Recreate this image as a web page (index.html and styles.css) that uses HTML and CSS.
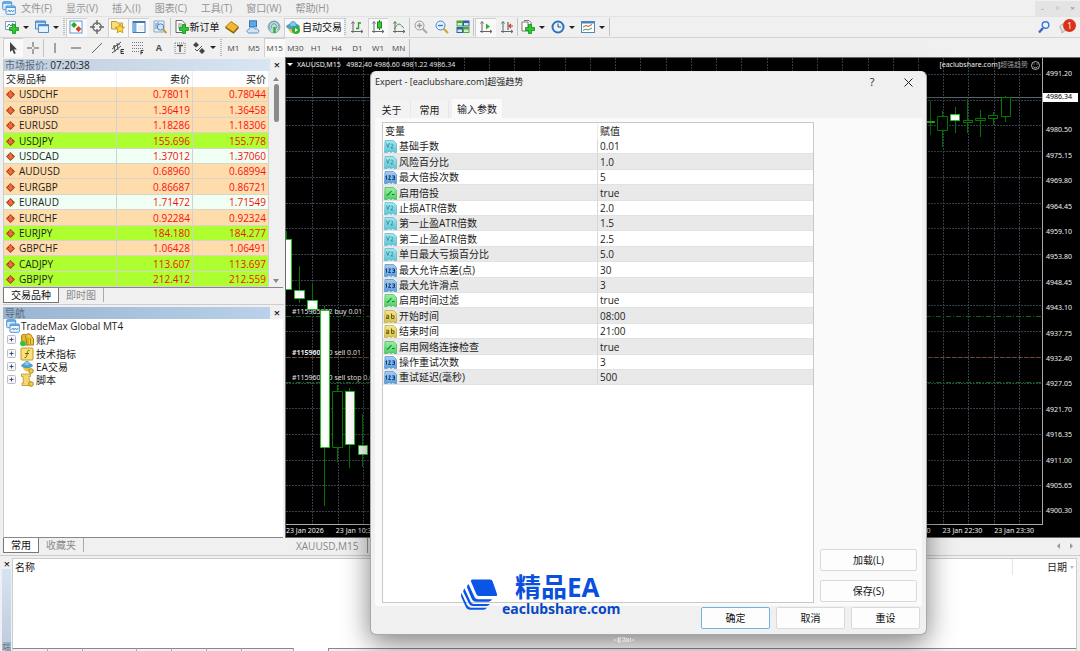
FILE: index.html
```html
<!DOCTYPE html>
<html lang="zh-CN">
<head>
<meta charset="utf-8">
<title>XAUUSD,M15</title>
<link rel="stylesheet" href="styles.css">
</head>
<body>
<svg class="defs" aria-hidden="true">
  <defs>
    <linearGradient id="gc" x1="0" y1="0" x2="0" y2="1"><stop offset="0" stop-color="#a4e8f0"/><stop offset="1" stop-color="#5fc4d4"/></linearGradient>
    <linearGradient id="gb" x1="0" y1="0" x2="0" y2="1"><stop offset="0" stop-color="#a9cdf0"/><stop offset="1" stop-color="#5b9fdc"/></linearGradient>
    <linearGradient id="gg" x1="0" y1="0" x2="0" y2="1"><stop offset="0" stop-color="#98f0a4"/><stop offset="1" stop-color="#4fcf66"/></linearGradient>
    <linearGradient id="gy" x1="0" y1="0" x2="0" y2="1"><stop offset="0" stop-color="#f3e88e"/><stop offset="1" stop-color="#d8c34c"/></linearGradient>
    <symbol id="i-dbl" viewBox="0 0 13 13"><path d="M1 .5h8.500l3 3v9h-2l-1.500-1-2 1-2-1-2 1h-2.500z" fill="url(#gc)" stroke="#56b4c4" stroke-width=".7"/><path d="M2.500 3.500l1.300 4 1.700-4.500M6.800 4.700c1-1.200 2.700-.4 2 .9L6.800 8h2.500" fill="none" stroke="#2a8796" stroke-width=".8"/></symbol>
    <symbol id="i-int" viewBox="0 0 13 13"><path d="M1 .5h8.500l3 3v9h-2l-1.500-1-2 1-2-1-2 1h-2.500z" fill="url(#gb)" stroke="#4f8cc8" stroke-width=".7"/><path d="M1.500 5.500l1-.8v4M4.500 4.900h2L4.600 8.500h2.300M8.300 4.900h2.200v3.700H8.200M8.800 6.700h1.700" fill="none" stroke="#12407c"/></symbol>
    <symbol id="i-bool" viewBox="0 0 13 13"><path d="M1 .5h8.500l3 3v9h-2l-1.500-1-2 1-2-1-2 1h-2.500z" fill="url(#gg)" stroke="#45b458" stroke-width=".7"/><path d="M2.500 8h1.500l3.500-4M8 7.500h2.500" fill="none" stroke="#137a28" stroke-width="1.100"/></symbol>
    <symbol id="i-str" viewBox="0 0 13 13"><path d="M1 .5h8.500l3 3v9h-2l-1.500-1-2 1-2-1-2 1h-2.500z" fill="url(#gy)" stroke="#b9a53c" stroke-width=".7"/><path d="M2.300 5.300h2.400v3.200H2.500V7h2M7.500 3.500v5h2.500V5.800H7.500" fill="none" stroke="#6e5b10"/></symbol>
    <symbol id="i-down" viewBox="0 0 9 9"><path d="M4.500 0L9 4.500 4.500 9 0 4.500z" fill="#a83a1a"/><path d="M3 1.500h3v2.500h2L4.500 7.700 1 4h2z" fill="#ee6a3c"/></symbol>
    <symbol id="i-plus" viewBox="0 0 9 9"><rect x=".5" y=".5" width="8" height="8" rx="1" fill="#f6f6f6" stroke="#bbb"/><path d="M2.500 4.500h4M4.500 2.500v4" stroke="#3a4f9a"/></symbol>
    <symbol id="i-app" viewBox="0 0 14 14"><rect x=".7" y=".7" width="9" height="8" rx="1" fill="#d9ecfb" stroke="#4b94d6"/><path d="M.7 2h9" stroke="#4b94d6" stroke-width="1.500"/><rect x="4" y="5" width="9.300" height="8.300" rx="1" fill="#eef7ff" stroke="#4b94d6"/><path d="M4 6.200h9.300" stroke="#4b94d6" stroke-width="1.500"/><path d="M5.500 11l1.500-2 1 2 1.500-2 1 2 1.500-2" fill="none" stroke="#3c7fc0" stroke-width=".8"/></symbol>
    <symbol id="i-add" viewBox="0 0 10 10"><path d="M3.500.5h3v3h3v3h-3v3h-3v-3h-3v-3h3z" fill="#2dcc2d" stroke="#128a12" stroke-width=".8"/></symbol>
    <symbol id="i-ea" viewBox="0 0 14 14"><path d="M3 7h7l1 4-3 2H5L2.500 10z" fill="#edc548"/><ellipse cx="7" cy="6.500" rx="6.500" ry="2.500" fill="#4fa6d8" stroke="#2b7fb5" stroke-width=".6"/><path d="M3.500 6c0-6 7-6 7 0-2 1-5 1-7 0z" fill="#7cc8ec" stroke="#2b7fb5" stroke-width=".6"/></symbol>
  </defs>
</svg>

<div class="app">
  <nav class="menubar">
    <svg class="ic14"><use href="#i-app"/></svg>
    <button>文件(F)</button><button>显示(V)</button><button>插入(I)</button><button>图表(C)</button><button>工具(T)</button><button>窗口(W)</button><button>帮助(H)</button>
    <div class="winctl"><button aria-label="最小化">-</button><button aria-label="还原">▫</button><button aria-label="关闭">×</button></div>
  </nav>

  <div class="toolbar">
    <button class="tb drop" aria-label="新图表"><svg class="ic14" viewBox="0 0 14 14"><path d="M.5 1.500h10v8H.5z" fill="#fff" stroke="#6f9cc8"/><path d="M2 7l2-3 2 2 2-3" fill="none" stroke="#5577a0"/><use href="#i-add" x="4" y="4" width="10" height="10"/></svg></button>
    <button class="tb drop" aria-label="配置"><svg class="ic14" viewBox="0 0 14 14"><path d="M.5 1h10v8H.5z" fill="#cfe4f8" stroke="#4f8cc8"/><path d="M3.500 4.500h10v8h-10z" fill="#e6f2fc" stroke="#4f8cc8"/><path d="M.5 2h10M3.500 5.500h10" stroke="#4f8cc8" stroke-width="1.500"/></svg></button>
    <i class="grip"></i>
    <div class="group g5">
      <button class="tb on" aria-label="市场报价"><svg class="ic14" viewBox="0 0 14 14"><rect x="1" y="1" width="12" height="12" fill="#fff" stroke="#5a9cd8"/><path d="M5 2l3 3-3 3-3-3z" fill="#28a828"/><path d="M9.500 6L12.500 9l-3 3-3-3z" fill="#d8402c"/></svg></button>
      <button class="tb" aria-label="数据窗口"><svg class="ic14" viewBox="0 0 14 14"><circle cx="7" cy="7" r="4.200" fill="none" stroke="#666" stroke-width="1.200"/><path d="M7 0v5M7 9v5M0 7h5M9 7h5" stroke="#666" stroke-width="1.400"/></svg></button>
      <button class="tb on" aria-label="导航"><svg class="ic14" viewBox="0 0 14 14"><path d="M.5 1.500h5l1 1.500h5v6H.5z" fill="#f7dd7c" stroke="#c79a2c"/><path d="M9 4l1.400 3 3.200.4-2.400 2.100.7 3.300L9 11.200l-2.900 1.600.7-3.300L4.400 7.400 7.600 7z" fill="#ffd83c" stroke="#c08a18" stroke-width=".8"/></svg></button>
      <button class="tb on" aria-label="终端"><svg class="ic14" viewBox="0 0 14 14"><rect x="1" y="1.500" width="12" height="11" fill="#fff" stroke="#3c78b8"/><path d="M1 2h12" stroke="#3c78b8" stroke-width="2"/><path d="M3 3v9" stroke="#7cb0e0" stroke-width="3"/><path d="M6 6h6M6 8h6M6 10h6" stroke="#ccd8e4" stroke-width=".7"/></svg></button>
      <button class="tb" aria-label="策略测试"><svg class="ic14" viewBox="0 0 14 14"><path d="M1 1h10v11H1z" fill="#e7eff7" stroke="#8da8c0"/><path d="M3 3v6M5 2v5" stroke="#5888b8"/><circle cx="7.500" cy="7" r="3.200" fill="#cfe6f8" stroke="#4a86c0"/><path d="M10 9.500l3.500 3.500" stroke="#d49a30" stroke-width="2"/></svg></button>
    </div>
    <i class="sep"></i>
    <button class="tb order"><svg class="ic14" viewBox="0 0 14 14"><path d="M1 .5h6l3 3v9H1z" fill="#fff" stroke="#666"/><path d="M3 4h4M3 6h5M3 8h3" stroke="#888"/><use href="#i-add" x="4" y="4" width="10" height="10"/></svg>新订单</button>
    <div class="group g3">
      <button class="tb" aria-label="编辑器"><svg class="ic14" viewBox="0 0 14 14"><path d="M.5 7L6 1.500l7.500 5.200-5 5.500z" fill="#f0b832" stroke="#b07b14"/><path d="M.5 7.500l8 5.500 5-5.500" fill="none" stroke="#8a5d0c" stroke-width="1.200"/></svg></button>
      <button class="tb" aria-label="社区"><svg class="ic14" viewBox="0 0 14 14"><rect x="3.500" y=".8" width="7" height="6" fill="#5fa8e4" stroke="#2f78bc"/><path d="M2.500 13c-2.500-1-1.500-4 .7-3.700C4 6.500 8 6.500 9 9c3-.8 5.500 2.500 2.500 4z" fill="#cfe4f6" stroke="#5a94cc"/></svg></button>
      <button class="tb" aria-label="信号"><svg class="ic14" viewBox="0 0 14 14"><circle cx="7" cy="7" r="6" fill="#c4d8de" stroke="#8ab0b8"/><path d="M3.500 10a5 5 0 1 1 7 0M5 8.500a2.800 2.800 0 1 1 4 0" fill="none" stroke="#6a9cb0"/><path d="M7.500 7v6" stroke="#38b038" stroke-width="2.500"/></svg></button>
    </div>
    <button class="tb auto on"><svg class="ic14" viewBox="0 0 14 14"><use href="#i-ea" width="14" height="14"/><circle cx="10" cy="10" r="4" fill="#2fae3c"/><path d="M9 8l3 2-3 2z" fill="#fff"/></svg>自动交易</button>
    <i class="grip"></i>
    <div class="group g3">
      <button class="tb" aria-label="柱状图"><svg class="ic14" viewBox="0 0 14 14"><path d="M3 2v11M1 11.500h12M1.500 3.500L3 1.500l1.500 2M11 10l2 1.500-2 1.500" fill="none" stroke="#666"/><path d="M8.500 2v7M8.500 3H11M6 8.500h2.500" stroke="#2a9a2a" stroke-width="1.300"/></svg></button>
      <button class="tb on" aria-label="蜡烛图"><svg class="ic14" viewBox="0 0 14 14"><path d="M3 2v11M1 11.500h12M1.500 3.500L3 1.500l1.500 2M11 10l2 1.500-2 1.500" fill="none" stroke="#666"/><path d="M8.500 0v10" stroke="#168a16"/><rect x="6.500" y="2" width="4" height="6" fill="#3cc83c" stroke="#168a16"/></svg></button>
      <button class="tb" aria-label="折线图"><svg class="ic14" viewBox="0 0 14 14"><path d="M3 2v11M1 11.500h12M1.500 3.500L3 1.500l1.500 2M11 10l2 1.500-2 1.500" fill="none" stroke="#666"/><path d="M2 9c2-2 3-5 5-5s3 3 5 4" fill="none" stroke="#3a9a3a"/></svg></button>
    </div>
    <i class="sep"></i>
    <div class="group g3">
      <button class="tb" aria-label="放大"><svg class="ic14" viewBox="0 0 14 14"><path d="M8.500 8.500l4.500 4.500" stroke="#aaa" stroke-width="2.200"/><circle cx="5.500" cy="5.500" r="4.500" fill="#eee" stroke="#999"/><path d="M3 5.500h5M5.500 3v5" stroke="#999" stroke-width="1.300"/></svg></button>
      <button class="tb" aria-label="缩小"><svg class="ic14" viewBox="0 0 14 14"><path d="M8.500 8.500l4.500 4.500" stroke="#d8a430" stroke-width="2.200"/><circle cx="5.500" cy="5.500" r="4.500" fill="#e4f2fc" stroke="#3f8acc"/><path d="M3 5.500h5" stroke="#2f78bc" stroke-width="1.300"/></svg></button>
      <button class="tb" aria-label="平铺"><svg class="ic14" viewBox="0 0 14 14"><path d="M.5.500h6.500v6h-6.500zM7 7h6.500v6H7z" fill="#4ca834"/><path d="M7 .5h6.500v6H7zM.5 7H7v6H.5z" fill="#2f5cb4"/><path d="M1.500 3h4.500v2.500H1.500zM8 3h4.500v2.500H8zM1.500 9.500h4.500V12H1.500zM8 9.500h4.500V12H8z" fill="#d4ecd4"/></svg></button>
    </div>
    <i class="sep"></i>
    <div class="group g2">
      <button class="tb on" aria-label="自动滚动"><svg class="ic14" viewBox="0 0 14 14"><path d="M3 2v11M1 11.500h12M1.500 3.500L3 1.500l1.500 2M11 10l2 1.500-2 1.500" fill="none" stroke="#666"/><path d="M7 3.500l4 3-4 3z" fill="#2fb02f"/></svg></button>
      <button class="tb" aria-label="图表平移"><svg class="ic14" viewBox="0 0 14 14"><path d="M3 2v11M1 11.500h12M1.500 3.500L3 1.500l1.500 2M11 10l2 1.500-2 1.500" fill="none" stroke="#666"/><path d="M8 2v8" stroke="#446"/><path d="M13 6H9M11 4L9 6l2 2" fill="none" stroke="#c83c20" stroke-width="1.200"/></svg></button>
    </div>
    <i class="sep"></i>
    <button class="tb drop" aria-label="指标"><svg class="ic14" viewBox="0 0 14 14"><path d="M1 2h6v9H1zM3 .5h5l2 2v8" fill="#fff" stroke="#777"/><use href="#i-add" x="4" y="4" width="10" height="10"/></svg></button>
    <button class="tb drop" aria-label="周期"><svg class="ic14" viewBox="0 0 14 14"><circle cx="7" cy="7" r="5.500" fill="#e8f3fd" stroke="#2f6fc0" stroke-width="2"/><path d="M7 3.500V7h3" fill="none" stroke="#345"/></svg></button>
    <button class="tb drop" aria-label="模板"><svg class="ic14" viewBox="0 0 14 14"><rect x=".5" y="1.500" width="13" height="11" fill="#fff" stroke="#4a86c0"/><path d="M.5 2.500h13" stroke="#4a86c0" stroke-width="2"/><path d="M2 7l3-1.500 2 1 4-2" fill="none" stroke="#c04a30"/><path d="M2 10.500l3-1.500 2 1 4-2" fill="none" stroke="#3a9a4a"/></svg></button>
    <i class="sep"></i>
    <div class="right">
      <svg class="ic14" viewBox="0 0 14 14"><path d="M6 8l-4 4.500" stroke="#3c66c0" stroke-width="2.400"/><circle cx="8.500" cy="5" r="3.300" fill="#eef4ff" stroke="#3c78dc" stroke-width="1.400"/></svg>
      <span class="chat"><svg class="ic14" viewBox="0 0 14 14"><path d="M1 7c0-4 10-5 11 0 0 3-4 4-6 3.500L3 13v-3C1.500 9.500 1 8.500 1 7z" fill="#e4e4e4" stroke="#aaa"/></svg><b class="badge">1</b></span>
    </div>
  </div>

  <div class="toolbar second">
    <button class="tb on" aria-label="光标"><svg class="ic14" viewBox="0 0 14 14"><path d="M4 1v10l2.300-2 1.700 4 1.800-.8L8 8.500h3z" fill="#444"/></svg></button>
    <button class="tb" aria-label="十字准线"><svg class="ic14" viewBox="0 0 14 14"><path d="M7 1v5M7 8v5M1 7h5M8 7h5" stroke="#555"/></svg></button>
    <i class="sep"></i>
    <div class="group g7">
      <button class="tb" aria-label="垂直线"><svg class="ic14" viewBox="0 0 14 14"><path d="M7 2v10" stroke="#555"/></svg></button>
      <button class="tb" aria-label="水平线"><svg class="ic14" viewBox="0 0 14 14"><path d="M2 7h10" stroke="#555"/></svg></button>
      <button class="tb" aria-label="趋势线"><svg class="ic14" viewBox="0 0 14 14"><path d="M2 12L12 2" stroke="#666"/></svg></button>
      <button class="tb" aria-label="等距通道"><svg class="ic14" viewBox="0 0 14 14"><path d="M1 8l9-7M1 12l9-7M3 4l1 7M6 2l1 7M2 6l7-3" stroke="#555"/><path d="M13 8.500h-3v4h3M10 10.500h2.500" fill="none" stroke="#333"/></svg></button>
      <button class="tb" aria-label="斐波那契"><svg class="ic14" viewBox="0 0 14 14"><path d="M1 1.500h12M1 4.500h12M1 7.500h12M1 10.500h7" stroke="#777" stroke-dasharray="1 1"/><path d="M12.500 9.500H10v4M10 11.500h2" fill="none" stroke="#333"/></svg></button>
      <button class="tb letter">A</button>
      <button class="tb" aria-label="文字标签"><svg class="ic14" viewBox="0 0 14 14"><rect x="2" y="2" width="10" height="10.500" fill="none" stroke="#777" stroke-dasharray="1 1"/><path d="M4 4.500h6M7 4.500V11" stroke="#444" stroke-width="1.500"/></svg></button>
    </div>
    <button class="tb drop" aria-label="箭头"><svg class="ic14" viewBox="0 0 14 14"><path d="M4 1l3 3-3 2.500L1 4zM10 7l3 3-3 3-3-3z" fill="#444"/><path d="M3 8l2 2 5-5" fill="none" stroke="#555"/></svg></button>
    <i class="grip"></i>
    <div class="group g9">
      <button class="tb tf">M1</button><button class="tb tf">M5</button><button class="tb tf on">M15</button><button class="tb tf">M30</button><button class="tb tf">H1</button><button class="tb tf">H4</button><button class="tb tf">D1</button><button class="tb tf">W1</button><button class="tb tf">MN</button>
    </div>
    <i class="sep"></i>
  </div>

  <div class="main">
    <aside class="side">
      <section class="panel">
        <header class="cap"><h2>市场报价: <span class="clock">07:20:38</span></h2><button aria-label="关闭">×</button></header>
        <div class="quotes">
          <table class="market">
            <thead><tr><th>交易品种</th><th>卖价</th><th>买价</th></tr></thead>
            <tbody>
              <tr><td><svg><use href="#i-down"/></svg>USDCHF</td><td>0.78011</td><td>0.78044</td></tr>
              <tr><td><svg><use href="#i-down"/></svg>GBPUSD</td><td>1.36419</td><td>1.36458</td></tr>
              <tr><td><svg><use href="#i-down"/></svg>EURUSD</td><td>1.18286</td><td>1.18306</td></tr>
              <tr class="lime"><td><svg><use href="#i-down"/></svg>USDJPY</td><td>155.696</td><td>155.778</td></tr>
              <tr class="mint"><td><svg><use href="#i-down"/></svg>USDCAD</td><td>1.37012</td><td>1.37060</td></tr>
              <tr><td><svg><use href="#i-down"/></svg>AUDUSD</td><td>0.68960</td><td>0.68994</td></tr>
              <tr><td><svg><use href="#i-down"/></svg>EURGBP</td><td>0.86687</td><td>0.86721</td></tr>
              <tr class="mint"><td><svg><use href="#i-down"/></svg>EURAUD</td><td>1.71472</td><td>1.71549</td></tr>
              <tr><td><svg><use href="#i-down"/></svg>EURCHF</td><td>0.92284</td><td>0.92324</td></tr>
              <tr class="lime"><td><svg><use href="#i-down"/></svg>EURJPY</td><td>184.180</td><td>184.277</td></tr>
              <tr><td><svg><use href="#i-down"/></svg>GBPCHF</td><td>1.06428</td><td>1.06491</td></tr>
              <tr class="lime"><td><svg><use href="#i-down"/></svg>CADJPY</td><td>113.607</td><td>113.697</td></tr>
              <tr class="lime"><td><svg><use href="#i-down"/></svg>GBPJPY</td><td>212.412</td><td>212.559</td></tr>
            </tbody>
          </table>
          <div class="scroll"><i class="up"></i><i class="thumb"></i><i class="dn"></i></div>
        </div>
        <div class="tabs"><button class="active">交易品种</button><button>即时图</button></div>
      </section>
      <section class="panel nav">
        <header class="cap focus"><h2>导航</h2><button aria-label="关闭">×</button></header>
        <div class="tree">
          <div class="root"><svg class="ic14"><use href="#i-app"/></svg>TradeMax Global MT4</div>
          <ul>
            <li><svg class="ic9"><use href="#i-plus"/></svg><svg class="ic14" viewBox="0 0 14 14"><path d="M1.500 3c0-2 4-2.500 5 0L8 12H2z" fill="#e8b830" stroke="#a87c10"/><path d="M5.500 2.500c1-2.500 6-2 6 .5l2 3V12H7z" fill="#f0c840" stroke="#a87c10"/><path d="M8 4.500v6M10.500 5v6" stroke="#b8901c"/><circle cx="2.800" cy="10.500" r="2.700" fill="#2fc43c"/></svg>账户</li>
            <li><svg class="ic9"><use href="#i-plus"/></svg><svg class="ic14" viewBox="0 0 14 14"><rect x="1" y="1" width="12" height="12" rx="1" fill="#fae27a" stroke="#c09a28"/><path d="M9.500 3.500C7 2.500 7.500 6 7 8s-1 3-2.500 2.500M5 6.500h4" fill="none" stroke="#7a5a10"/></svg>技术指标</li>
            <li><svg class="ic9"><use href="#i-plus"/></svg><svg class="ic14" viewBox="0 0 14 14"><use href="#i-ea" width="14" height="12"/><circle cx="11" cy="11" r="2.300" fill="#f2cc44" stroke="#b08818"/></svg>EA交易</li>
            <li><svg class="ic9"><use href="#i-plus"/></svg><svg class="ic14" viewBox="0 0 14 14"><path d="M1.500 1h9v2.500H9l.5 6.500H12v2.500H2V10h1.500L3 3.500H1.500z" fill="#f4d66c" stroke="#b8922c" stroke-width=".8"/><circle cx="11" cy="11" r="2.300" fill="#f2cc44" stroke="#b08818"/></svg>脚本</li>
          </ul>
        </div>
        <div class="tabs"><button class="active">常用</button><button>收藏夹</button></div>
      </section>
    </aside>

    <section class="work">
      <div class="chart">
        <div class="plotcol">
          <svg class="plot" role="img" aria-label="XAUUSD,M15">
            <g class="grid">
              <path d="M26.500 0v467M52.500 0v467M77.500 0v467M102.500 0v467M127.500 0v467M152.500 0v467M178.500 0v467M203.500 0v467M228.500 0v467M253.500 0v467M279.500 0v467M304.500 0v467M329.500 0v467M354.500 0v467M380.500 0v467M405.500 0v467M430.500 0v467M455.500 0v467M481.500 0v467M506.500 0v467M531.500 0v467M556.500 0v467M582.500 0v467M607.500 0v467M632.500 0v467M657.500 0v467M682.500 0v467M708.500 0v467M733.500 0v467"/>
              <path d="M0 16.500h3000M0 42.500h3000M0 67.500h3000M0 93.500h3000M0 119.500h3000M0 145.500h3000M0 170.500h3000M0 196.500h3000M0 222.500h3000M0 247.500h3000M0 273.500h3000M0 299.500h3000M0 325.500h3000M0 350.500h3000M0 376.500h3000M0 402.500h3000M0 427.500h3000M0 453.500h3000"/>
            </g>
            <path d="M0 39.500h3000" stroke="#56626e"/>
            <path d="M0 258.500h3000M0 324.500h3000" stroke="#0a6a1c" stroke-dasharray="5 2 1 2"/>
            <path d="M0 299.500h3000" stroke="#7a4a30" stroke-dasharray="4 2"/>
            <g transform="translate(-286 -58)" class="lbl">
              <text x="292" y="314">#115965882 buy 0.01</text>
              <text x="292" y="355"><tspan font-weight="bold">#1159600</tspan>00 sell 0.01</text>
              <text x="292" y="380">#115960000 sell stop 0.01</text>
            </g>
            <g transform="translate(-286 -58)">
              <path class="wick" d="M286.500 231v8M299.500 266v37M312.500 283v28M324.500 306v200M337.500 385v6M337.500 448v14M349.500 388v80M362.500 414v53M370.500 455v31"/>
              <path class="bull" d="M285.500 239.500h6v50h-6zM294.500 290.500h10v8h-10zM307.500 300.500h10v9h-10zM320.500 310.500h9v137h-9zM345.500 391.500h9v53h-9zM358.500 445.500h9v9h-9z"/>
              <path class="bear" d="M332.500 391.500h10v56h-10z"/>
            </g>
            <svg x="100%" y="0" class="anchor"><g transform="translate(-1043 -58)">
              <path class="wick" d="M931.500 101v34M943.500 111v36M956.500 107v26M968.500 99v34M981.500 110v27M994.500 112v13M1006.500 96v26"/>
              <path class="bull" d="M926.500 121.500h9v1h-9zM951.500 114.500h9v6h-9z"/>
              <path class="bear" d="M938.500 116.500h10v14h-10zM964.500 120.500h9v2h-9zM976.500 118.500h10v2h-10zM989.500 115.500h9v3h-9zM1002.500 97.500h9v19h-9z"/>
              <g fill="none" stroke="#ddd" stroke-width=".8"><circle cx="1036.500" cy="65.500" r="4"/><path d="M1034.500 66.500c.8 1.800 3.200 1.800 4 0M1035 63.500v1M1038 63.500v1"/></g>
            </g></svg>
          </svg>
          <div class="ohlc"><span><i class="tri"></i>XAUUSD,M15&nbsp;&nbsp; 4982.40 4986.60 4981.22 4986.34</span><span>[eaclubshare.com]<span class="dim">超强趋势</span></span></div>
          <div class="times"><span>23 Jan 2026</span><span>23 Jan 10:30</span><span class="push">23 Jan 21:30</span><span>23 Jan 22:30</span><span>23 Jan 23:30</span></div>
        </div>
        <ol class="prices"><li>4991.20</li><li class="now">4986.34</li><li>4980.50</li><li>4975.15</li><li>4969.80</li><li>4964.45</li><li>4959.10</li><li>4953.80</li><li>4948.45</li><li>4943.10</li><li>4937.75</li><li>4932.40</li><li>4927.05</li><li>4921.70</li><li>4916.35</li><li>4911.00</li><li>4905.65</li><li>4900.30</li></ol>
      </div>
      <div class="charttabs"><button>XAUUSD,M15</button><span class="arrows"><i></i><i class="r"></i></span></div>
    </section>
  </div>

  <section class="terminal">
    <div class="rail"><button aria-label="关闭">×</button><div class="railbar"><span>端</span></div></div>
    <div class="files">
      <div class="fhead"><span>名称</span><span class="date">日期<i></i></span></div>
      <div class="fend"><i></i><i></i><i></i><i></i><i></i><i></i><i></i><i class="rest"></i></div>
    </div>
  </section>
</div>

<div class="dialog" role="dialog" aria-labelledby="dt">
  <header><h1 id="dt">Expert - [eaclubshare.com]超强趋势</h1><button aria-label="帮助">?</button><button aria-label="关闭"><svg width="9" height="9" viewBox="0 0 9 9"><path d="M.5.500l8 8M8.500.500l-8 8" stroke="#222"/></svg></button></header>
  <div class="dtabs" role="tablist"><button role="tab">关于</button><button role="tab">常用</button><button role="tab" class="active" aria-selected="true">输入参数</button></div>
  <div class="dbody">
    <div class="grid-box">
      <table class="params">
        <thead><tr><th>变量</th><th>赋值</th></tr></thead>
        <tbody>
          <tr><td><svg><use href="#i-dbl"/></svg>基础手数</td><td>0.01</td></tr>
          <tr><td><svg><use href="#i-dbl"/></svg>风险百分比</td><td>1.0</td></tr>
          <tr><td><svg><use href="#i-int"/></svg>最大倍投次数</td><td>5</td></tr>
          <tr><td><svg><use href="#i-bool"/></svg>启用倍投</td><td>true</td></tr>
          <tr><td><svg><use href="#i-dbl"/></svg>止损ATR倍数</td><td>2.0</td></tr>
          <tr><td><svg><use href="#i-dbl"/></svg>第一止盈ATR倍数</td><td>1.5</td></tr>
          <tr><td><svg><use href="#i-dbl"/></svg>第二止盈ATR倍数</td><td>2.5</td></tr>
          <tr><td><svg><use href="#i-dbl"/></svg>单日最大亏损百分比</td><td>5.0</td></tr>
          <tr><td><svg><use href="#i-int"/></svg>最大允许点差(点)</td><td>30</td></tr>
          <tr><td><svg><use href="#i-int"/></svg>最大允许滑点</td><td>3</td></tr>
          <tr><td><svg><use href="#i-bool"/></svg>启用时间过滤</td><td>true</td></tr>
          <tr><td><svg><use href="#i-str"/></svg>开始时间</td><td>08:00</td></tr>
          <tr><td><svg><use href="#i-str"/></svg>结束时间</td><td>21:00</td></tr>
          <tr><td><svg><use href="#i-bool"/></svg>启用网络连接检查</td><td>true</td></tr>
          <tr><td><svg><use href="#i-int"/></svg>操作重试次数</td><td>3</td></tr>
          <tr><td><svg><use href="#i-int"/></svg>重试延迟(毫秒)</td><td>500</td></tr>
        </tbody>
      </table>
    </div>
    <div class="sidebtns"><button class="btn">加载(L)</button><button class="btn">保存(S)</button></div>
  </div>
  <footer><button class="btn primary">确定</button><button class="btn">取消</button><button class="btn">重设</button></footer>
  <div class="brand">
    <svg width="36" height="31" viewBox="0 0 36 31"><path d="M12 .5h17q2 0 2.700 2L36 15q.6 2-1.500 2H18q-2 0-2.700-2L10 2.500Q9.500.500 12 .5z" fill="#0a55e6"/><path d="M7.500 5l6 13q1.200 2.300 3.500 2.300h14q-1 2.400-3.500 2.400H15q-3 0-4.300-3L6 8.500Q5.500 6.500 7.500 5z" fill="#0a55e6"/><path d="M3.500 9.500l6 13Q10.700 25 13 25h16q-1.500 2-3.500 2H12q-3 0-4.300-3L2.300 13Q1.800 11 3.500 9.500z" fill="#0a55e6"/><path d="M.5 14l5.500 12q1.500 2.700 4 2.700h16q-1.500 2.100-3.500 2.100H9q-3 0-4.300-3L.5 18.500Q-.5 16 .5 14z" fill="#0a55e6"/></svg>
    <div><strong>精品EA</strong><em>eaclubshare.com</em></div>
  </div>
  <svg class="mark" width="20" height="6" viewBox="0 0 20 6" aria-hidden="true"><path d="M0 3h2M4 1v4M4 1h3M4 3h3M4 5h3M8 1h3v4M9 3v2M12 1l3 4M15 1l-3 4M17 1c-1 1-1 3 0 4M18 3h2"/></svg>
</div>
</body>
</html>
```
FILE: styles.css
```css
* { box-sizing: border-box; }
html, body { height: 100%; }
body {
  margin: 0;
  overflow: hidden;
  background: #f0f0f0;
  color: #1c1c1c;
  font: 10px/14px "Open Sans", "Noto Sans", "Noto Sans CJK SC", sans-serif;
}
button {
  margin: 0;
  padding: 0;
  border: 0;
  background: none;
  color: inherit;
  font: inherit;
  white-space: nowrap;
}
h1, h2 { margin: 0; font: inherit; }
i { display: block; }
svg { display: block; flex: none; }
.defs { position: absolute; width: 0; height: 0; }
.ic14 { width: 14px; height: 14px; }
.ic9 { width: 9px; height: 9px; }

.app { display: flex; flex-direction: column; height: 100vh; }

/* menu and toolbars */
.menubar {
  display: flex;
  align-items: center;
  height: 16px;
  padding-left: 2px;
  color: #949494;
  flex: none;
}
.menubar > button { margin-left: 5px; margin-right: 9px; }
.winctl { display: flex; margin-left: auto; font-size: 8px; color: #888; }
.winctl button { width: 15px; height: 15px; background: #e4e4e4; line-height: 12px; }
.toolbar {
  display: flex;
  align-items: center;
  height: 21px;
  padding-left: 3px;
  border-top: 1px solid #e2e2e2;
  flex: none;
}
.toolbar.second { height: 20px; border-top-color: #d4d4d4; }
.tb {
  display: flex;
  align-items: center;
  justify-content: center;
  width: 20px;
  height: 19px;
  flex: none;
}
.tb.on { background: #f9f9f9; box-shadow: inset 1px 1px #cfcfcf; }
.group { display: flex; flex: none; }
.group .tb { flex: 1; width: auto; }
.g2 { width: 42px; }
.g3 { width: 62px; }
.g5 { width: 104px; }
.g7 { width: 145px; }
.g9 { width: 186px; }
.sep, .grip { width: 1px; height: 18px; margin-right: 1px; background: #c4c4c4; flex: none; }
.grip { width: 2px; background: repeating-linear-gradient(#bbb 0 1px, #f0f0f0 1px 2px); }
.drop { width: 30px; justify-content: flex-start; padding-left: 2px; gap: 4px; }
.drop::after { content: ""; border: 3px solid transparent; border-top-color: #222; border-bottom: 0; }
.order { width: 50px; gap: 1px; color: #111; }
.auto { width: 60px; gap: 2px; color: #111; }
.letter { font-weight: 700; font-size: 9px; color: #555; }
.tf { font-size: 8px; color: #444; }
.right { display: flex; align-items: center; gap: 8px; margin: 0 4px 0 auto; }
.chat { position: relative; padding-right: 3px; }
.badge {
  position: absolute;
  right: 0;
  top: -1px;
  width: 13px;
  border-radius: 7px;
  background: #dc3018;
  color: #fff;
  font-size: 9px;
  font-weight: 400;
  line-height: 13px;
  text-align: center;
}

/* left column */
.main { display: flex; flex: 1; min-height: 0; }
.side { display: flex; flex-direction: column; width: 285px; padding: 1px 1px 2px 3px; flex: none; }
.panel { display: flex; flex-direction: column; }
.panel.nav { flex: 1; margin-top: 1px; border-top: 1px solid #cdcdcd; padding-top: 1px; min-height: 0; }
.cap { display: flex; height: 13px; align-items: center; }
.cap h2 {
  flex: 1;
  padding-left: 2px;
  color: #5a6b80;
  background: linear-gradient(90deg, #bfcddd, #d8e5f2);
  line-height: 12px;
}
.clock { color: #222; }
.cap.focus h2 { background: linear-gradient(90deg, #99b4d1, #b9d1ea); line-height: 12px; height: 12px; }
.cap button { width: 14px; line-height: 12px; font-size: 11px; color: #111; font-weight: 600; }
.quotes { display: flex; border-bottom: 1px solid #888; margin-right: 1px; }
table { border-collapse: separate; border-spacing: 0; table-layout: fixed; }
th { font-weight: 400; text-align: left; }
th, td { padding: 0; white-space: nowrap; line-height: 14px; }
tr { height: 15px; }
tbody tr:nth-child(5n+2), tbody tr:nth-child(5n+4) { height: 16px; }
.market { flex: 1; background: #ffdcac; border-left: 1px solid #ccc; }
.market thead tr { height: 16px; background: #fff; }
.market th { padding: 0 2px; border-right: 1px solid #eee; }
.market th + th, .market td + td { width: 76px; text-align: right; padding-right: 2px; }
.market td { border-right: 1px solid #d2d2cc; border-bottom: 1px solid #d8d4cc; }
.market td:first-child { padding-left: 2px; }
.market td + td { color: #f81010; }
.market td svg { display: inline-block; width: 9px; height: 9px; margin-right: 4px; vertical-align: -1px; }
.lime { background: #adff2f; }
.mint { background: #f0fff4; }
.scroll { display: flex; flex-direction: column; align-items: center; width: 14px; padding: 6px 0 4px; }
.up, .dn { border: 3px solid transparent; }
.up { border-bottom: 4px solid #888; border-top: 0; }
.dn { border-top: 4px solid #888; border-bottom: 0; margin-top: auto; }
.thumb { width: 5px; height: 38px; margin-top: 3px; border-radius: 3px; background: #8a8a8a; }
.tabs { display: flex; height: 15px; color: #8a8a8a; }
.tabs button { padding: 0 7px; border-right: 1px solid #aaa; height: 14px; line-height: 14px; }
.tabs .active { height: 15px; background: #fff; border: 1px solid #777; border-top: 0; color: #111; line-height: 15px; }
.tree { flex: 1; padding: 0 2px; background: #fff; border-left: 1px solid #ccc; border-bottom: 1px solid #888; margin-right: 1px; min-height: 0; }
.root { display: flex; align-items: center; gap: 1px; height: 14px; }
.tree ul { margin: 0; padding: 0 0 0 1px; list-style: none; }
.tree li { display: flex; align-items: center; gap: 2px; height: 13px; margin-bottom: 1px; }
.tree li + li { margin-bottom: 0; }
.tree li .ic14 { margin-left: 2px; }

/* chart */
.work { display: flex; flex-direction: column; flex: 1; min-width: 0; }
.chart {
  display: flex;
  flex: 1;
  min-height: 0;
  border: 1px solid #6a6a6a;
  border-width: 1px 0 1px 1px;
  background: #000;
  color: #f0f0f0;
  font: 7px/10px "Noto Sans", "Noto Sans CJK SC", sans-serif;
}
.plotcol { position: relative; display: flex; flex-direction: column; flex: 1; min-width: 0; }
.plot { flex: 1; width: 100%; min-height: 0; overflow: hidden; border-right: 1px solid #aaa; border-bottom: 1px solid #aaa; }
.anchor { overflow: visible; }
.grid path { fill: none; stroke: #37414b; stroke-dasharray: 2 1; }
.lbl { fill: #e4e4e4; font-size: 7px; }
.wick { stroke: #007400; fill: none; }
.bull { stroke: #22c022; fill: #fff; }
.bear { stroke: #007c00; fill: #000; }
.ohlc { position: absolute; inset: 2px 15px auto 1px; display: flex; justify-content: space-between; }
.ohlc .dim { color: #9a9a9a; }
.tri { display: inline-block; border: 3px solid transparent; border-top-color: #fff; border-bottom: 0; margin-right: 4px; vertical-align: 1px; }
.times { display: flex; gap: 12px; height: 12px; line-height: 12px; white-space: nowrap; padding-right: 9px; }
.push { margin-left: auto; }
.prices { display: flex; flex-direction: column; width: 37px; margin: 0; padding: 3px 2px 13px 0; list-style: none; flex: none; }
.prices li { display: flex; flex: 1; align-items: center; padding-left: 3px; }
.prices .now { background: linear-gradient(#fff, #fff) 0 7px / 100% 9px no-repeat; color: #000; align-items: flex-start; padding-top: 6px; }
.charttabs { display: flex; height: 17px; color: #888; }
.charttabs button { height: 15px; padding: 0 9px 0 11px; border-right: 1px solid #999; }
.arrows { display: flex; gap: 10px; margin: 5px 7px 0 auto; }
.arrows i { width: 0; height: 0; border: 3px solid transparent; border-right-color: #999; border-left: 0; }
.arrows .r { border: 3px solid transparent; border-left-color: #999; border-right: 0; }

/* terminal */
.terminal { display: flex; height: 96px; border-top: 1px solid #ccc; padding: 2px 3px 0 0; flex: none; }
.rail { display: flex; flex-direction: column; width: 12px; padding-left: 2px; }
.rail button { height: 11px; line-height: 9px; font-size: 11px; font-weight: 600; }
.railbar { display: flex; flex: 1; align-items: flex-end; width: 9px; background: linear-gradient(#d6e4f2, #bccbdc); color: #5a6b80; }
.railbar span { writing-mode: vertical-rl; line-height: 9px; font-size: 9px; }
.files { display: flex; flex-direction: column; flex: 1; border: 1px solid #ccc; border-bottom: 0; background: #fff; }
.fhead { display: flex; height: 16px; padding-left: 2px; align-items: center; }
.date { display: flex; align-items: center; justify-content: flex-end; gap: 3px; width: 64px; height: 16px; margin-left: auto; border-left: 1px solid #e4e4e4; padding-right: 2px; }
.date i { border: 2px solid transparent; border-top: 3px solid #bbb; border-bottom: 0; }
.fend { display: flex; height: 3px; margin-top: auto; }
.fend i { width: 35px; border-right: 1px solid #aaa; border-top: 1px solid #888; background: #f0f0f0; }
.fend i:nth-child(3) { width: 54px; }
.fend i:nth-child(7) { width: 52px; }
.fend .rest { flex: 1; margin-left: 34px; border-left: 1px solid #888; border-right: 0; }

/* expert dialog */
.dialog {
  position: absolute;
  left: 370px;
  top: 71px;
  width: 557px;
  height: 564px;
  display: flex;
  flex-direction: column;
  border-radius: 6px;
  border: 1px solid #a8a8a8;
  border-top-color: #e8e8e8;
  background: #f0f0f0;
  box-shadow: 0 8px 28px rgba(0, 0, 0, .5);
}
.dialog header { display: flex; height: 20px; padding: 0 4px; align-items: center; }
.dialog h1 { flex: 1; font-size: 9px; }
.dialog header button { display: grid; place-items: center; width: 36px; height: 20px; font-size: 11px; }
.dialog header button:last-child { margin-right: -4px; }
.dtabs { display: flex; align-items: flex-end; height: 26px; padding-left: 2px; }
.dtabs button { width: 38px; height: 17px; background: #f3f3f3; border-right: 1px solid #e8e8e8; }
.dtabs .active { width: 50px; height: 19px; background: #fafafa; border: 0; margin-left: 3px; }
.dbody { display: flex; flex: 1; gap: 6px; margin: 0 4px; padding: 4px 5px 3px 7px; background: #fafafa; min-height: 0; }
.grid-box { flex: 1; background: #fff; border: 1px solid #c8c8c8; }
.params { width: 100%; }
.params thead tr { height: 16px; }
.params th:first-child, .params td:first-child { width: 215px; border-right: 1px solid #d8d8d8; }
.params th:first-child { padding-left: 2px; border-right-color: #eee; }
.params td { border-bottom: 1px solid #e2e2e2; }
.params td:first-child { padding-left: 1px; }
.params td + td, .params th + th { padding-left: 2px; }
.params tbody tr:nth-child(even) { background: #e9e9e9; }
.params svg { display: inline-block; width: 13px; height: 13px; margin-right: 2px; vertical-align: -3px; }
.sidebtns { display: flex; flex-direction: column; justify-content: flex-end; gap: 9px; width: 97px; padding-bottom: 1px; }
.btn { height: 22px; background: #fdfdfd; border: 1px solid #d9d9d9; border-radius: 2px; color: #111; }
.dialog footer { display: flex; justify-content: flex-end; gap: 6px; height: 28px; padding: 1px 6px 5px 0; }
.dialog footer .btn { width: 69px; }
.dialog footer .primary { border-color: #6db4e8; }
.brand { position: absolute; left: 90px; bottom: 18px; display: flex; align-items: center; gap: 5px; color: #0a50dc; }
.brand strong { display: block; padding-left: 13px; font-size: 26px; line-height: 28px; }
.brand em { display: block; font: 700 14px/15px "Noto Sans", sans-serif; color: #0848c4; }
.mark { position: absolute; left: 243px; bottom: -9px; fill: none; stroke: #eee; stroke-width: 1; }
```
